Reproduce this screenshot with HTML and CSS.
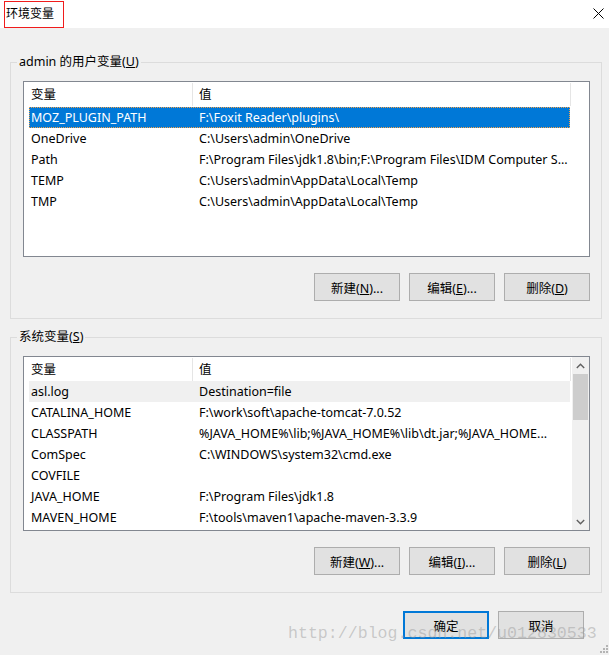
FILE: index.html
```html
<!DOCTYPE html>
<html lang="zh-CN">
<head>
<meta charset="utf-8">
<title>环境变量</title>
<link rel="stylesheet" href="styles.css">
</head>
<body>
<div class="window">
  <div class="titlebar">
    <span class="title">环境变量</span>
    <svg class="close" width="11" height="11" viewBox="0 0 11 11"><path d="M0.5 0.5 L10.5 10.5 M10.5 0.5 L0.5 10.5" stroke="#000" stroke-width="1" fill="none"/></svg>
  </div>
  <div class="content">
    <fieldset class="group group-user">
      <legend>admin 的用户变量(<u>U</u>)</legend>
      <div class="group-body">
        <div class="listview lv-user">
          <div class="lv-main">
            <div class="lv-header"><div class="hc hc1">变量</div><div class="hc hc2">值</div></div>
            <div class="row selected"><span class="c1">MOZ_PLUGIN_PATH</span><span class="c2">F:\Foxit Reader\plugins\</span></div>
            <div class="row"><span class="c1">OneDrive</span><span class="c2">C:\Users\admin\OneDrive</span></div>
            <div class="row"><span class="c1">Path</span><span class="c2">F:\Program Files\jdk1.8\bin;F:\Program Files\IDM Computer S...</span></div>
            <div class="row"><span class="c1">TEMP</span><span class="c2">C:\Users\admin\AppData\Local\Temp</span></div>
            <div class="row"><span class="c1">TMP</span><span class="c2">C:\Users\admin\AppData\Local\Temp</span></div>
          </div>
        </div>
        <div class="btnrow">
          <button class="btn">新建(<u>N</u>)...</button>
          <button class="btn">编辑(<u>E</u>)...</button>
          <button class="btn">删除(<u>D</u>)</button>
        </div>
      </div>
    </fieldset>
    <fieldset class="group group-sys">
      <legend>系统变量(<u>S</u>)</legend>
      <div class="group-body">
        <div class="listview lv-sys">
          <div class="lv-main">
            <div class="lv-header"><div class="hc hc1">变量</div><div class="hc hc2">值</div></div>
            <div class="row hot"><span class="c1">asl.log</span><span class="c2">Destination=file</span></div>
            <div class="row"><span class="c1">CATALINA_HOME</span><span class="c2">F:\work\soft\apache-tomcat-7.0.52</span></div>
            <div class="row"><span class="c1">CLASSPATH</span><span class="c2">%JAVA_HOME%\lib;%JAVA_HOME%\lib\dt.jar;%JAVA_HOME...</span></div>
            <div class="row"><span class="c1">ComSpec</span><span class="c2">C:\WINDOWS\system32\cmd.exe</span></div>
            <div class="row"><span class="c1">COVFILE</span><span class="c2"></span></div>
            <div class="row"><span class="c1">JAVA_HOME</span><span class="c2">F:\Program Files\jdk1.8</span></div>
            <div class="row"><span class="c1">MAVEN_HOME</span><span class="c2">F:\tools\maven1\apache-maven-3.3.9</span></div>
          </div>
          <div class="scrollbar">
            <div class="sb-arrow"><svg width="9" height="6" viewBox="0 0 9 6"><path d="M0.8 5 L4.5 1.3 L8.2 5" stroke="#606060" stroke-width="1.4" fill="none"/></svg></div>
            <div class="sb-thumb"></div>
            <div class="sb-track"></div>
            <div class="sb-arrow"><svg width="9" height="6" viewBox="0 0 9 6"><path d="M0.8 1 L4.5 4.7 L8.2 1" stroke="#606060" stroke-width="1.4" fill="none"/></svg></div>
          </div>
        </div>
        <div class="btnrow">
          <button class="btn">新建(<u>W</u>)...</button>
          <button class="btn">编辑(<u>I</u>)...</button>
          <button class="btn">删除(<u>L</u>)</button>
        </div>
      </div>
    </fieldset>
    <div class="dlg-buttons">
      <button class="btn btn-default">确定</button>
      <button class="btn">取消</button>
    </div>
  </div>
  <div class="watermark">http://blog.csdn.net/u012830533</div>
  <svg class="grip" width="8" height="8" viewBox="0 0 8 8"><g fill="#b4b4b4"><rect x="6" y="0" width="2" height="2"/><rect x="3" y="3" width="2" height="2"/><rect x="6" y="3" width="2" height="2"/><rect x="0" y="6" width="2" height="2"/><rect x="3" y="6" width="2" height="2"/><rect x="6" y="6" width="2" height="2"/></g></svg>
</div>
</body>
</html>
```
FILE: styles.css
```css
* { box-sizing: border-box; }
html, body { margin: 0; padding: 0; }
body {
  width: 609px;
  height: 655px;
  overflow: hidden;
  background: #f0f0f0;
  font-family: "Noto Sans", "Noto Sans CJK SC", sans-serif;
  font-size: 12.5px;
  color: #000;
}
.window { position: relative; width: 609px; height: 655px; }
.titlebar {
  height: 28px;
  background: #fff;
  display: flex;
  justify-content: space-between;
  align-items: flex-start;
}
.title {
  margin: 1px 0 0 4px;
  width: 60px;
  height: 27px;
  border: 1px solid #f01c1c;
  padding: 3px 0 0 1px;
  line-height: 16px;
  font-size: 12px;
  font-family: "Noto Sans CJK SC", sans-serif;
}
.close { margin: 8px 5px 0 0; }
.content { padding: 0 7px 0 10px; }
.group {
  margin: 26px 0 0;
  border: 1px solid #dcdcdc;
  padding: 0 0 17px 0;
  min-width: 0;
}
.group-sys { margin-top: 10px; }
.group legend {
  margin-left: 6px;
  padding: 0 2px;
  line-height: 16px;
}
.group-body { padding: 0 11px 0 12px; }
.listview {
  margin-top: 11px;
  height: 176px;
  border: 1px solid #828790;
  background: #fff;
  display: flex;
}
.lv-sys { height: 175px; }
.lv-main { width: 547px; }
.lv-header { display: flex; height: 25px; }
.lv-sys .lv-header { height: 24px; }
.hc { line-height: 23px; height: 23px; margin-top: 1px; }
.hc1 { width: 169px; padding-left: 7px; border-right: 1px solid #e5e5e5; }
.hc2 { flex: 1; padding-left: 6px; border-right: 1px solid #e5e5e5; }
.row {
  display: flex;
  height: 21px;
  line-height: 21px;
  margin: 0 1px 0 5px;
  white-space: nowrap;
}
.c1 { width: 164px; padding-left: 2px; flex: none; }
.c2 { flex: 1; padding-left: 6px; overflow: hidden; }
.row.selected {
  background: #0078d7;
  color: #fff;
  outline: 1px dotted #f3a24c;
  outline-offset: -1px;
}
.row.hot { background: #f0f0f0; }
.scrollbar {
  margin-left: auto;
  width: 17px;
  background: #f0f0f0;
  display: flex;
  flex-direction: column;
}
.sb-arrow {
  height: 17px;
  display: flex;
  align-items: center;
  justify-content: center;
}
.sb-thumb { height: 46px; margin: 0 1px; background: #cdcdcd; }
.sb-track { flex: 1; }
.btnrow {
  display: flex;
  justify-content: flex-end;
  gap: 9px;
  margin-top: 16px;
}
.btn {
  width: 86px;
  height: 28px;
  border: 1px solid #adadad;
  background: #e1e1e1;
  font: inherit;
  color: #000;
  padding: 0;
  margin: 0;
}
.btn-default { border: 2px solid #0078d7; }
.dlg-buttons {
  display: flex;
  justify-content: flex-end;
  gap: 9px;
  margin-top: 18px;
  padding-right: 18px;
}
.watermark {
  position: absolute;
  left: 288px;
  top: 624px;
  font-family: "Liberation Mono", monospace;
  font-size: 16.6px;
  line-height: 20px;
  color: rgba(150, 150, 150, 0.45);
  white-space: nowrap;
  pointer-events: none;
}
.grip { position: absolute; right: 1px; bottom: 2px; }
```
